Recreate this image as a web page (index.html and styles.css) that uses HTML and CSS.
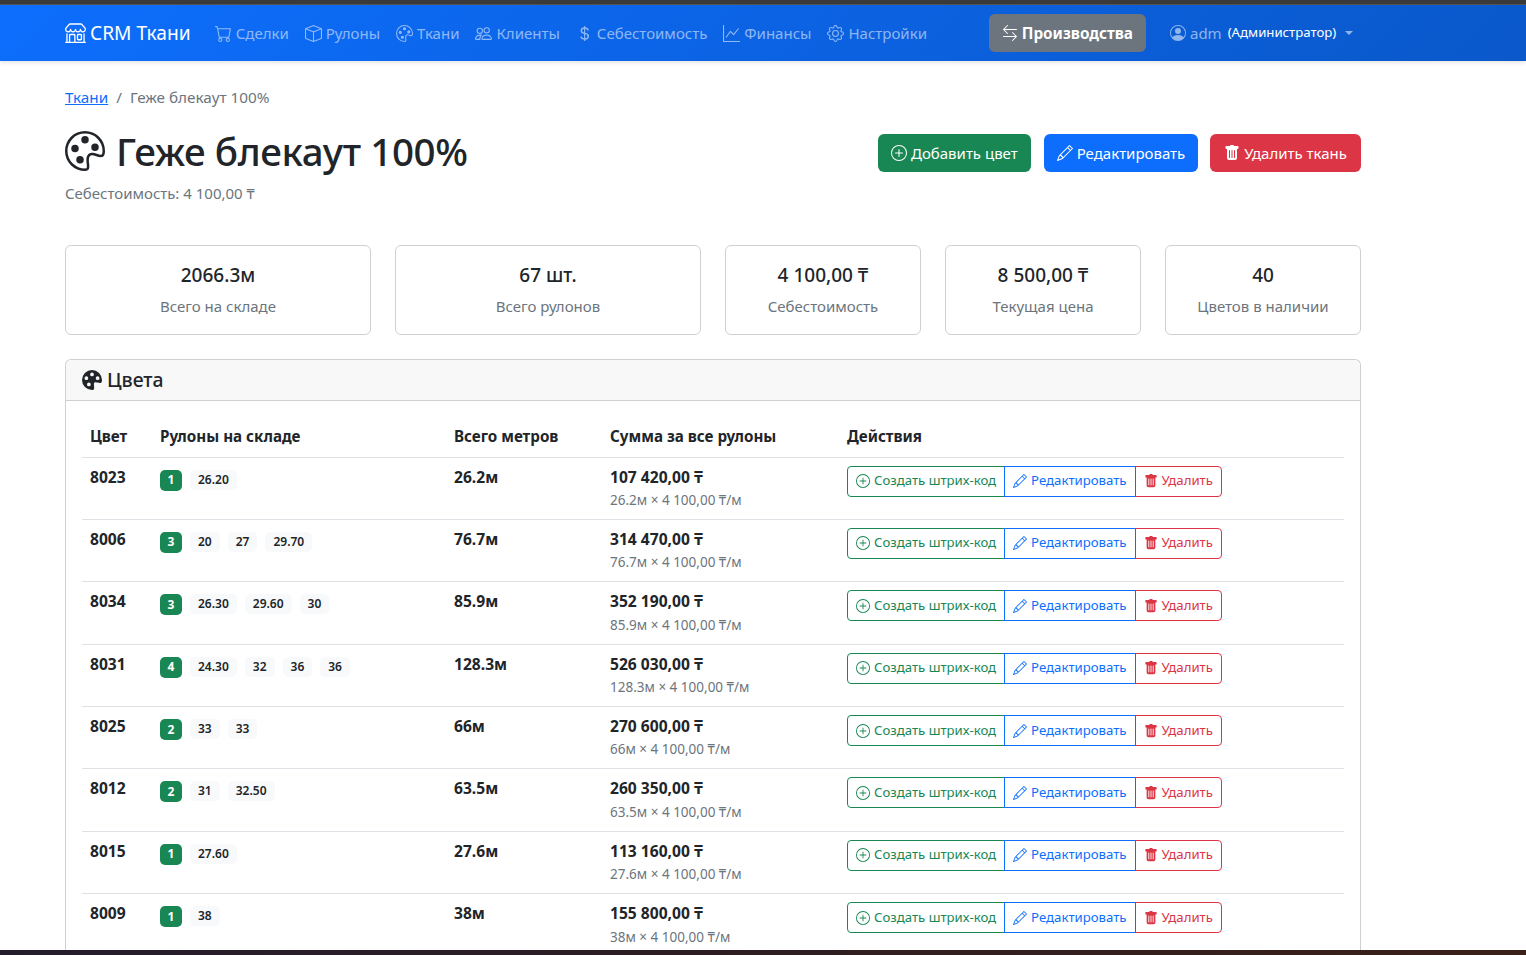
FILE: index.html
```html
<!DOCTYPE html>
<html lang="ru">
<head>
  <meta charset="utf-8">
  <title>Геже блекаут 100%</title>
  <link rel="stylesheet" href="styles.css">
</head>
<body>
  <svg class="sprite" xmlns="http://www.w3.org/2000/svg">
    <symbol id="i-shop" viewBox="0 0 16 16"><path d="M2.97 1.35A1 1 0 0 1 3.73 1h8.54a1 1 0 0 1 .76.35l2.609 3.044A1.5 1.5 0 0 1 16 5.37v.255a2.375 2.375 0 0 1-4.25 1.458A2.37 2.37 0 0 1 9.875 8 2.37 2.37 0 0 1 8 7.083 2.37 2.37 0 0 1 6.125 8a2.37 2.37 0 0 1-1.875-.917A2.375 2.375 0 0 1 0 5.625V5.37a1.5 1.5 0 0 1 .361-.976zm1.78 4.275a1.375 1.375 0 0 0 2.75 0 .5.5 0 0 1 1 0 1.375 1.375 0 0 0 2.75 0 .5.5 0 0 1 1 0 1.375 1.375 0 1 0 2.75 0V5.37a.5.5 0 0 0-.12-.325L12.27 2H3.73L1.12 5.045A.5.5 0 0 0 1 5.37v.255a1.375 1.375 0 0 0 2.75 0 .5.5 0 0 1 1 0M1.5 8.5A.5.5 0 0 1 2 9v6h1v-5a1 1 0 0 1 1-1h3a1 1 0 0 1 1 1v5h6V9a.5.5 0 0 1 1 0v6h.5a.5.5 0 0 1 0 1H.5a.5.5 0 0 1 0-1H1V9a.5.5 0 0 1 .5-.5M4 15h3v-5H4zm5-5a1 1 0 0 1 1-1h2a1 1 0 0 1 1 1v3a1 1 0 0 1-1 1h-2a1 1 0 0 1-1-1zm3 0h-2v3h2z"/></symbol>
    <symbol id="i-cart" viewBox="0 0 16 16"><path d="M0 1.5A.5.5 0 0 1 .5 1H2a.5.5 0 0 1 .485.379L2.89 3H14.5a.5.5 0 0 1 .491.592l-1.5 8A.5.5 0 0 1 13 12H4a.5.5 0 0 1-.491-.408L2.01 3.607 1.61 2H.5a.5.5 0 0 1-.5-.5M3.102 4l1.313 7h8.17l1.313-7zM5 12a2 2 0 1 0 0 4 2 2 0 0 0 0-4m7 0a2 2 0 1 0 0 4 2 2 0 0 0 0-4m-7 1a1 1 0 1 1 0 2 1 1 0 0 1 0-2m7 0a1 1 0 1 1 0 2 1 1 0 0 1 0-2"/></symbol>
    <symbol id="i-box" viewBox="0 0 16 16"><path d="M8.186 1.113a.5.5 0 0 0-.372 0L1.846 3.5 8 5.961 14.154 3.5zM15 4.239l-6.5 2.6v7.922l6.5-2.6V4.24zM7.5 14.762V6.838L1 4.239v7.925zM7.443.184a1.5 1.5 0 0 1 1.114 0l7.129 2.852A.5.5 0 0 1 16 3.5v8.662a1 1 0 0 1-.629.928l-7.185 2.874a.5.5 0 0 1-.372 0L.63 13.09a1 1 0 0 1-.63-.928V3.5a.5.5 0 0 1 .314-.464z"/></symbol>
    <symbol id="i-palette" viewBox="0 0 16 16"><path d="M8 5a1.5 1.5 0 1 0 0-3 1.5 1.5 0 0 0 0 3m4 3a1.5 1.5 0 1 0 0-3 1.5 1.5 0 0 0 0 3M5.5 7a1.5 1.5 0 1 1-3 0 1.5 1.5 0 0 1 3 0m.5 6a1.5 1.5 0 1 0 0-3 1.5 1.5 0 0 0 0 3"/><path d="M16 8c0 3.15-1.866 2.585-3.567 2.07C11.42 9.763 10.465 9.473 10 10c-.603.683-.475 1.819-.351 2.92C9.826 14.495 9.996 16 8 16a8 8 0 1 1 8-8m-8 7c.611 0 .654-.171.655-.176.078-.146.124-.464.07-1.119-.014-.168-.037-.37-.061-.591-.052-.464-.112-1.005-.118-1.462-.01-.707.083-1.61.704-2.314.369-.417.845-.578 1.272-.618.404-.038.812.026 1.16.104.343.077.702.186 1.025.284l.028.008c.346.105.658.199.953.266.653.148.904.083.991.024C14.717 9.38 15 9.161 15 8a7 7 0 1 0-7 7"/></symbol>
    <symbol id="i-palette-fill" viewBox="0 0 16 16"><path d="M12.433 10.07C14.133 10.585 16 11.15 16 8a8 8 0 1 0-8 8c1.996 0 1.826-1.504 1.649-3.08-.124-1.101-.252-2.237.351-2.92.465-.527 1.42-.237 2.433.07zM8 5a1.5 1.5 0 1 1 0-3 1.5 1.5 0 0 1 0 3zm4.5 3a1.5 1.5 0 1 1 0-3 1.5 1.5 0 0 1 0 3zM5 6.5a1.5 1.5 0 1 1-3 0 1.5 1.5 0 0 1 3 0zm.5 6.5a1.5 1.5 0 1 1 0-3 1.5 1.5 0 0 1 0 3z"/></symbol>
    <symbol id="i-people" viewBox="0 0 16 16"><path d="M15 14s1 0 1-1-1-4-5-4-5 3-5 4 1 1 1 1zm-7.978-1L7 12.996c.001-.264.167-1.03.76-1.72C8.312 10.629 9.282 10 11 10c1.717 0 2.687.63 3.24 1.276.593.69.758 1.457.76 1.72l-.008.002-.014.002zM11 7a2 2 0 1 0 0-4 2 2 0 0 0 0 4m3-2a3 3 0 1 1-6 0 3 3 0 0 1 6 0M6.936 9.28a6 6 0 0 0-1.23-.247A7 7 0 0 0 5 9c-4 0-5 3-5 4q0 1 1 1h4.216A2.24 2.24 0 0 1 5 13c0-1.01.377-2.042 1.09-2.904.243-.294.526-.569.846-.816M4.92 10A5.5 5.5 0 0 0 4 13H1c0-.26.164-1.03.76-1.724.545-.636 1.492-1.256 3.16-1.275ZM1.5 5.5a3 3 0 1 1 6 0 3 3 0 0 1-6 0m3-2a2 2 0 1 0 0 4 2 2 0 0 0 0-4"/></symbol>
    <symbol id="i-dollar" viewBox="0 0 16 16"><path d="M4 10.781c.148 1.667 1.513 2.85 3.591 3.003V15h1.043v-1.216c2.27-.179 3.678-1.438 3.678-3.3 0-1.59-.947-2.51-2.956-3.028l-.722-.187V3.467c1.122.11 1.879.714 2.07 1.616h1.47c-.166-1.6-1.54-2.748-3.54-2.875V1H7.591v1.233c-1.939.23-3.27 1.472-3.27 3.156 0 1.454.966 2.483 2.661 2.917l.61.162v4.031c-1.149-.17-1.94-.8-2.131-1.718zm3.391-3.836c-1.043-.263-1.6-.825-1.6-1.616 0-.944.704-1.641 1.8-1.828v3.495l-.2-.05zm1.591 1.872c1.287.323 1.852.859 1.852 1.769 0 1.097-.826 1.828-2.2 1.939V8.73z"/></symbol>
    <symbol id="i-graph" viewBox="0 0 16 16"><path fill-rule="evenodd" d="M0 0h1v15h15v1H0zm14.817 3.113a.5.5 0 0 1 .07.704l-4.5 5.5a.5.5 0 0 1-.74.037L7.06 6.767l-3.656 5.027a.5.5 0 0 1-.808-.588l4-5.5a.5.5 0 0 1 .758-.06l2.609 2.61 4.15-5.073a.5.5 0 0 1 .704-.07"/></symbol>
    <symbol id="i-gear" viewBox="0 0 16 16"><path d="M8 4.754a3.246 3.246 0 1 0 0 6.492 3.246 3.246 0 0 0 0-6.492M5.754 8a2.246 2.246 0 1 1 4.492 0 2.246 2.246 0 0 1-4.492 0"/><path d="M9.796 1.343c-.527-1.79-3.065-1.79-3.592 0l-.094.319a.873.873 0 0 1-1.255.52l-.292-.16c-1.64-.892-3.433.902-2.54 2.541l.159.292a.873.873 0 0 1-.52 1.255l-.319.094c-1.79.527-1.79 3.065 0 3.592l.319.094a.873.873 0 0 1 .52 1.255l-.16.292c-.892 1.64.901 3.434 2.541 2.54l.292-.159a.873.873 0 0 1 1.255.52l.094.319c.527 1.79 3.065 1.79 3.592 0l.094-.319a.873.873 0 0 1 1.255-.52l.292.16c1.64.893 3.434-.902 2.54-2.541l-.159-.292a.873.873 0 0 1 .52-1.255l.319-.094c1.79-.527 1.79-3.065 0-3.592l-.319-.094a.873.873 0 0 1-.52-1.255l.16-.292c.893-1.64-.902-3.433-2.541-2.54l-.292.159a.873.873 0 0 1-1.255-.52zm-2.633.283c.246-.835 1.428-.835 1.674 0l.094.319a1.873 1.873 0 0 0 2.693 1.115l.291-.16c.764-.415 1.6.42 1.184 1.185l-.159.292a1.873 1.873 0 0 0 1.116 2.692l.318.094c.835.246.835 1.428 0 1.674l-.319.094a1.873 1.873 0 0 0-1.115 2.693l.16.291c.415.764-.42 1.6-1.185 1.184l-.291-.159a1.873 1.873 0 0 0-2.693 1.116l-.094.318c-.246.835-1.428.835-1.674 0l-.094-.319a1.873 1.873 0 0 0-2.692-1.115l-.292.16c-.764.415-1.6-.42-1.184-1.185l.159-.291A1.873 1.873 0 0 0 1.945 8.93l-.319-.094c-.835-.246-.835-1.428 0-1.674l.319-.094A1.873 1.873 0 0 0 3.06 4.377l-.16-.292c-.415-.764.42-1.6 1.185-1.184l.292.159a1.873 1.873 0 0 0 2.692-1.115z"/></symbol>
    <symbol id="i-arrows" viewBox="0 0 16 16"><path fill-rule="evenodd" d="M1 11.5a.5.5 0 0 0 .5.5h11.793l-3.147 3.146a.5.5 0 0 0 .708.708l4-4a.5.5 0 0 0 0-.708l-4-4a.5.5 0 0 0-.708.708L13.293 11H1.5a.5.5 0 0 0-.5.5m14-7a.5.5 0 0 1-.5.5H2.707l3.147 3.146a.5.5 0 1 1-.708.708l-4-4a.5.5 0 0 1 0-.708l4-4a.5.5 0 1 1 .708.708L2.707 4H14.5a.5.5 0 0 1 .5.5"/></symbol>
    <symbol id="i-person" viewBox="0 0 16 16"><path d="M11 6a3 3 0 1 1-6 0 3 3 0 0 1 6 0"/><path fill-rule="evenodd" d="M0 8a8 8 0 1 1 16 0A8 8 0 0 1 0 8m8-7a7 7 0 0 0-5.468 11.37C3.242 11.226 4.805 10 8 10s4.757 1.225 5.468 2.37A7 7 0 0 0 8 1"/></symbol>
    <symbol id="i-plus" viewBox="0 0 16 16"><path d="M8 15A7 7 0 1 1 8 1a7 7 0 0 1 0 14m0 1A8 8 0 1 0 8 0a8 8 0 0 0 0 16"/><path d="M8 4a.5.5 0 0 1 .5.5v3h3a.5.5 0 0 1 0 1h-3v3a.5.5 0 0 1-1 0v-3h-3a.5.5 0 0 1 0-1h3v-3A.5.5 0 0 1 8 4"/></symbol>
    <symbol id="i-pencil" viewBox="0 0 16 16"><path d="M12.146.146a.5.5 0 0 1 .708 0l3 3a.5.5 0 0 1 0 .708l-10 10a.5.5 0 0 1-.168.11l-5 2a.5.5 0 0 1-.65-.65l2-5a.5.5 0 0 1 .11-.168zM11.207 2.5 13.5 4.793 14.793 3.5 12.5 1.207zm1.586 3L10.5 3.207 4 9.707V10h.5a.5.5 0 0 1 .5.5v.5h.5a.5.5 0 0 1 .5.5v.5h.293zm-9.761 5.175-.106.106-1.528 3.821 3.821-1.528.106-.106A.5.5 0 0 1 5 12.5V12h-.5a.5.5 0 0 1-.5-.5V11h-.5a.5.5 0 0 1-.468-.325"/></symbol>
    <symbol id="i-trash" viewBox="0 0 16 16"><path d="M2.5 1a1 1 0 0 0-1 1v1a1 1 0 0 0 1 1H3v9a2 2 0 0 0 2 2h6a2 2 0 0 0 2-2V4h.5a1 1 0 0 0 1-1V2a1 1 0 0 0-1-1H10a1 1 0 0 0-1-1H7a1 1 0 0 0-1 1zm3 4a.5.5 0 0 1 .5.5v7a.5.5 0 0 1-1 0v-7a.5.5 0 0 1 .5-.5M8 5a.5.5 0 0 1 .5.5v7a.5.5 0 0 1-1 0v-7A.5.5 0 0 1 8 5m3 .5v7a.5.5 0 0 1-1 0v-7a.5.5 0 0 1 1 0"/></symbol>
  </svg>

  <div class="top-strip"></div>

  <nav class="navbar">
    <a class="brand" href="#"><svg class="icon brand-icon"><use href="#i-shop"/></svg>CRM Ткани</a>
    <ul class="nav-links">
      <li><a href="#"><svg class="icon"><use href="#i-cart"/></svg>Сделки</a></li>
      <li><a href="#"><svg class="icon"><use href="#i-box"/></svg>Рулоны</a></li>
      <li><a href="#"><svg class="icon"><use href="#i-palette"/></svg>Ткани</a></li>
      <li><a href="#"><svg class="icon"><use href="#i-people"/></svg>Клиенты</a></li>
      <li><a href="#"><svg class="icon"><use href="#i-dollar"/></svg>Себестоимость</a></li>
      <li><a href="#"><svg class="icon"><use href="#i-graph"/></svg>Финансы</a></li>
      <li><a href="#"><svg class="icon"><use href="#i-gear"/></svg>Настройки</a></li>
    </ul>
    <a class="switch-btn" href="#"><svg class="icon"><use href="#i-arrows"/></svg>Производства</a>
    <a class="user-menu" href="#"><svg class="icon"><use href="#i-person"/></svg>adm <small>(Администратор)</small><span class="caret"></span></a>
  </nav>

  <main class="page">
    <div class="breadcrumb"><a href="#">Ткани</a><span class="sep">/</span><span class="current">Геже блекаут 100%</span></div>

    <div class="title-row">
      <div>
        <h1><svg class="icon"><use href="#i-palette"/></svg>Геже блекаут 100%</h1>
        <p class="subtitle">Себестоимость: 4 100,00 ₸</p>
      </div>
      <div class="title-actions">
        <a class="btn btn-green" href="#"><svg class="icon"><use href="#i-plus"/></svg>Добавить цвет</a>
        <a class="btn btn-blue" href="#"><svg class="icon"><use href="#i-pencil"/></svg>Редактировать</a>
        <a class="btn btn-red" href="#"><svg class="icon"><use href="#i-trash"/></svg>Удалить ткань</a>
      </div>
    </div>

    <div class="stats">
      <div class="stat"><div class="stat-value">2066.3м</div><div class="stat-label">Всего на складе</div></div>
      <div class="stat"><div class="stat-value">67 шт.</div><div class="stat-label">Всего рулонов</div></div>
      <div class="stat"><div class="stat-value">4 100,00 ₸</div><div class="stat-label">Себестоимость</div></div>
      <div class="stat"><div class="stat-value">8 500,00 ₸</div><div class="stat-label">Текущая цена</div></div>
      <div class="stat"><div class="stat-value">40</div><div class="stat-label">Цветов в наличии</div></div>
    </div>

    <section class="card">
      <div class="card-header"><svg class="icon"><use href="#i-palette-fill"/></svg>Цвета</div>
      <div class="card-body">
        <table class="colors">
          <thead>
            <tr><th class="col-color">Цвет</th><th class="col-rolls">Рулоны на складе</th><th class="col-total">Всего метров</th><th class="col-sum">Сумма за все рулоны</th><th>Действия</th></tr>
          </thead>
          <tbody>
            <tr>
              <td class="strong">8023</td>
              <td><div class="rolls"><span class="count">1</span><span class="roll">26.20</span></div></td>
              <td class="strong">26.2м</td>
              <td><div class="strong">107 420,00 ₸</div><div class="calc">26.2м × 4 100,00 ₸/м</div></td>
              <td><div class="btn-group"><a class="gbtn g-green" href="#"><svg class="icon"><use href="#i-plus"/></svg>Создать штрих-код</a><a class="gbtn g-blue" href="#"><svg class="icon"><use href="#i-pencil"/></svg>Редактировать</a><a class="gbtn g-red" href="#"><svg class="icon"><use href="#i-trash"/></svg>Удалить</a></div></td>
            </tr>
            <tr>
              <td class="strong">8006</td>
              <td><div class="rolls"><span class="count">3</span><span class="roll">20</span><span class="roll">27</span><span class="roll">29.70</span></div></td>
              <td class="strong">76.7м</td>
              <td><div class="strong">314 470,00 ₸</div><div class="calc">76.7м × 4 100,00 ₸/м</div></td>
              <td><div class="btn-group"><a class="gbtn g-green" href="#"><svg class="icon"><use href="#i-plus"/></svg>Создать штрих-код</a><a class="gbtn g-blue" href="#"><svg class="icon"><use href="#i-pencil"/></svg>Редактировать</a><a class="gbtn g-red" href="#"><svg class="icon"><use href="#i-trash"/></svg>Удалить</a></div></td>
            </tr>
            <tr>
              <td class="strong">8034</td>
              <td><div class="rolls"><span class="count">3</span><span class="roll">26.30</span><span class="roll">29.60</span><span class="roll">30</span></div></td>
              <td class="strong">85.9м</td>
              <td><div class="strong">352 190,00 ₸</div><div class="calc">85.9м × 4 100,00 ₸/м</div></td>
              <td><div class="btn-group"><a class="gbtn g-green" href="#"><svg class="icon"><use href="#i-plus"/></svg>Создать штрих-код</a><a class="gbtn g-blue" href="#"><svg class="icon"><use href="#i-pencil"/></svg>Редактировать</a><a class="gbtn g-red" href="#"><svg class="icon"><use href="#i-trash"/></svg>Удалить</a></div></td>
            </tr>
            <tr>
              <td class="strong">8031</td>
              <td><div class="rolls"><span class="count">4</span><span class="roll">24.30</span><span class="roll">32</span><span class="roll">36</span><span class="roll">36</span></div></td>
              <td class="strong">128.3м</td>
              <td><div class="strong">526 030,00 ₸</div><div class="calc">128.3м × 4 100,00 ₸/м</div></td>
              <td><div class="btn-group"><a class="gbtn g-green" href="#"><svg class="icon"><use href="#i-plus"/></svg>Создать штрих-код</a><a class="gbtn g-blue" href="#"><svg class="icon"><use href="#i-pencil"/></svg>Редактировать</a><a class="gbtn g-red" href="#"><svg class="icon"><use href="#i-trash"/></svg>Удалить</a></div></td>
            </tr>
            <tr>
              <td class="strong">8025</td>
              <td><div class="rolls"><span class="count">2</span><span class="roll">33</span><span class="roll">33</span></div></td>
              <td class="strong">66м</td>
              <td><div class="strong">270 600,00 ₸</div><div class="calc">66м × 4 100,00 ₸/м</div></td>
              <td><div class="btn-group"><a class="gbtn g-green" href="#"><svg class="icon"><use href="#i-plus"/></svg>Создать штрих-код</a><a class="gbtn g-blue" href="#"><svg class="icon"><use href="#i-pencil"/></svg>Редактировать</a><a class="gbtn g-red" href="#"><svg class="icon"><use href="#i-trash"/></svg>Удалить</a></div></td>
            </tr>
            <tr>
              <td class="strong">8012</td>
              <td><div class="rolls"><span class="count">2</span><span class="roll">31</span><span class="roll">32.50</span></div></td>
              <td class="strong">63.5м</td>
              <td><div class="strong">260 350,00 ₸</div><div class="calc">63.5м × 4 100,00 ₸/м</div></td>
              <td><div class="btn-group"><a class="gbtn g-green" href="#"><svg class="icon"><use href="#i-plus"/></svg>Создать штрих-код</a><a class="gbtn g-blue" href="#"><svg class="icon"><use href="#i-pencil"/></svg>Редактировать</a><a class="gbtn g-red" href="#"><svg class="icon"><use href="#i-trash"/></svg>Удалить</a></div></td>
            </tr>
            <tr>
              <td class="strong">8015</td>
              <td><div class="rolls"><span class="count">1</span><span class="roll">27.60</span></div></td>
              <td class="strong">27.6м</td>
              <td><div class="strong">113 160,00 ₸</div><div class="calc">27.6м × 4 100,00 ₸/м</div></td>
              <td><div class="btn-group"><a class="gbtn g-green" href="#"><svg class="icon"><use href="#i-plus"/></svg>Создать штрих-код</a><a class="gbtn g-blue" href="#"><svg class="icon"><use href="#i-pencil"/></svg>Редактировать</a><a class="gbtn g-red" href="#"><svg class="icon"><use href="#i-trash"/></svg>Удалить</a></div></td>
            </tr>
            <tr>
              <td class="strong">8009</td>
              <td><div class="rolls"><span class="count">1</span><span class="roll">38</span></div></td>
              <td class="strong">38м</td>
              <td><div class="strong">155 800,00 ₸</div><div class="calc">38м × 4 100,00 ₸/м</div></td>
              <td><div class="btn-group"><a class="gbtn g-green" href="#"><svg class="icon"><use href="#i-plus"/></svg>Создать штрих-код</a><a class="gbtn g-blue" href="#"><svg class="icon"><use href="#i-pencil"/></svg>Редактировать</a><a class="gbtn g-red" href="#"><svg class="icon"><use href="#i-trash"/></svg>Удалить</a></div></td>
            </tr>
          </tbody>
        </table>
      </div>
    </section>
  </main>

  <div class="bottom-strip"></div>
</body>
</html>
```

FILE: styles.css
```css
:root {
  --blue: #0d6efd;
  --green: #198754;
  --red: #dc3545;
  --text: #212529;
  --muted: #6c757d;
  --border: #dee2e6;
  --card-border: #d0d0d0;
  --font: "Noto Sans", "DejaVu Sans", sans-serif;
}

* {
  margin: 0;
  padding: 0;
  box-sizing: border-box;
}

html, body {
  height: 955px;
  overflow: hidden;
}

body {
  display: flex;
  flex-direction: column;
  font-family: var(--font);
  font-size: 16px;
  line-height: 1.5;
  color: var(--text);
  background: #fff;
}

a {
  text-decoration: none;
  color: inherit;
}

.sprite {
  display: none;
}

.icon {
  width: 16px;
  height: 16px;
  flex: none;
  fill: currentColor;
}

.top-strip {
  height: 5px;
  flex: none;
  background: #3a3a3a;
  border-bottom: 1px solid #555;
}

.bottom-strip {
  height: 5px;
  flex: none;
  background: linear-gradient(90deg, #231c2c, #3a2018);
}

/* navbar */
.navbar {
  height: 56px;
  flex: none;
  display: flex;
  align-items: center;
  padding-left: 65px;
  background: linear-gradient(135deg, #0d6efd, #0a58ca);
  box-shadow: 0 2px 4px rgba(0, 0, 0, 0.1);
  position: relative;
}

.brand {
  display: flex;
  align-items: center;
  gap: 4px;
  font-size: 19.2px;
  color: #fff;
  margin-right: 24px;
}

.brand .brand-icon {
  width: 21px;
  height: 21px;
}

.nav-links {
  display: flex;
  list-style: none;
  gap: 16px;
  width: 774px;
}

.nav-links a {
  display: flex;
  align-items: center;
  gap: 4px;
  font-size: 15px;
  color: rgba(255, 255, 255, 0.55);
}

.nav-links .icon {
  width: 17px;
  height: 17px;
}

.switch-btn {
  display: flex;
  align-items: center;
  gap: 4px;
  height: 38px;
  padding: 0 13px;
  background: var(--muted);
  border-radius: 6px;
  color: #fff;
  font-weight: 700;
  font-size: 15.3px;
}

.user-menu {
  display: flex;
  align-items: center;
  gap: 4px;
  margin-left: 24px;
  font-size: 15px;
  color: rgba(255, 255, 255, 0.55);
}

.user-menu small {
  color: #fff;
  font-size: 13.2px;
  margin-left: 2px;
}

.caret {
  width: 0;
  height: 0;
  margin-left: 5px;
  border-top: 4.8px solid currentColor;
  border-left: 4.8px solid transparent;
  border-right: 4.8px solid transparent;
}

/* page */
.page {
  flex: 1;
  min-height: 0;
  overflow: hidden;
  width: 1296px;
  margin-left: 65px;
  padding-top: 25px;
}

.breadcrumb {
  display: flex;
  font-size: 15.3px;
  color: var(--muted);
  height: 24px;
  margin-bottom: 17px;
}

.breadcrumb a {
  color: var(--blue);
  text-decoration: underline;
}

.sep {
  padding: 0 8px;
}

.title-row {
  display: flex;
  justify-content: space-between;
  height: 118px;
}

h1 {
  display: flex;
  align-items: center;
  gap: 11px;
  font-size: 38.5px;
  letter-spacing: -0.4px;
  font-weight: 500;
  line-height: 48px;
  margin-bottom: 7px;
}

h1 .icon {
  width: 40px;
  height: 40px;
}

.subtitle {
  font-size: 15px;
  color: var(--muted);
}

.title-actions {
  display: flex;
  gap: 13px;
  padding-top: 7px;
}

.btn {
  display: flex;
  align-items: center;
  gap: 4px;
  height: 38px;
  padding: 0 13px;
  border-radius: 6px;
  color: #fff;
  font-size: 15px;
}

.btn-green { background: var(--green); }
.btn-blue { background: var(--blue); margin-right: -1px; }
.btn-red { background: var(--red); padding: 0 14px; }

.stats {
  display: grid;
  grid-template-columns: 306px 306px 196px 196px 196px;
  gap: 24px;
  margin-bottom: 24px;
}

.stat {
  height: 90px;
  padding-top: 16px;
  border: 1px solid var(--card-border);
  border-radius: 6px;
  text-align: center;
}

.stat-value {
  font-size: 19px;
  font-weight: 500;
  line-height: 26px;
  margin-bottom: 7px;
}

.stat-label {
  font-size: 15px;
  color: var(--muted);
}

/* colors table */
.card {
  border: 1px solid var(--card-border);
  border-bottom: none;
  border-radius: 6px 6px 0 0;
}

.card-header {
  display: flex;
  align-items: center;
  gap: 5px;
  height: 41px;
  padding-left: 16px;
  background: #f8f8f8;
  border-bottom: 1px solid var(--card-border);
  border-radius: 6px 6px 0 0;
  font-size: 19.4px;
  font-weight: 500;
}

.card-header .icon {
  width: 20px;
  height: 20px;
}

.card-body {
  padding: 16px;
}

.colors {
  width: 100%;
  border-collapse: collapse;
  table-layout: fixed;
}

.colors th {
  height: 40px;
  padding: 0 8px;
  text-align: left;
  font-size: 15.2px;
  font-weight: 700;
  border-bottom: 1px solid var(--border);
}

.col-color { width: 70px; }
.col-rolls { width: 294px; }
.col-total { width: 156px; }
.col-sum { width: 237px; }

.colors td {
  height: 62px;
  padding: 8px;
  vertical-align: top;
  border-bottom: 1px solid var(--border);
}

.strong {
  font-size: 15.6px;
  font-weight: 700;
}

.calc {
  font-size: 13.5px;
  line-height: 22px;
  color: var(--muted);
}

.rolls {
  display: flex;
  gap: 8px;
  padding-top: 4px;
}

.count {
  display: flex;
  align-items: center;
  justify-content: center;
  width: 22px;
  height: 21px;
  border-radius: 5px;
  background: var(--green);
  color: #fff;
  font-size: 12px;
  font-weight: 700;
}

.roll {
  height: 20px;
  padding: 0 8px;
  border-radius: 5px;
  background: #f8f9fa;
  font-size: 12px;
  font-weight: 600;
  line-height: 20px;
}

.btn-group {
  display: flex;
  height: 31px;
}

.gbtn {
  display: flex;
  align-items: center;
  gap: 4px;
  padding: 0 8px;
  border: 1px solid;
  background: #fff;
  font-size: 13.2px;
  margin-left: -1px;
}

.gbtn .icon {
  width: 14px;
  height: 14px;
}

.gbtn:first-child {
  margin-left: 0;
  border-radius: 4px 0 0 4px;
}

.gbtn:last-child {
  border-radius: 0 4px 4px 0;
}

.g-green { color: var(--green); }
.g-blue { color: var(--blue); position: relative; }
.g-red { color: var(--red); }
```
